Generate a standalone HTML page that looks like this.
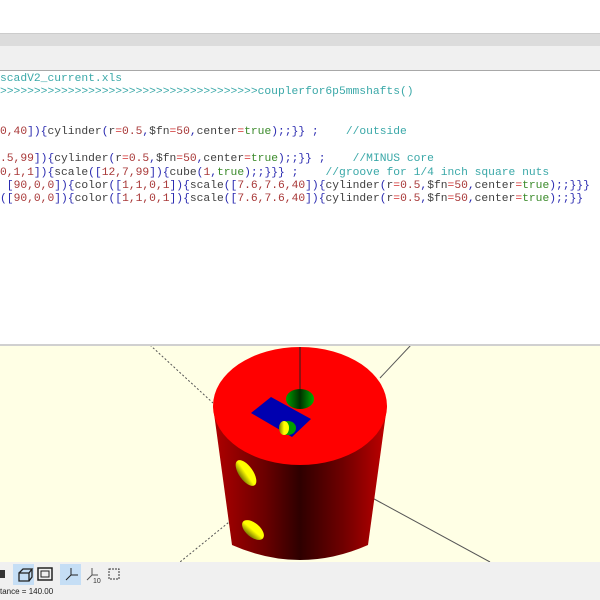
<!DOCTYPE html>
<html><head><style>
body{margin:0;width:600px;height:600px;overflow:hidden;background:#fff;position:relative;font-family:"Liberation Mono",monospace}
.l{position:absolute;left:0;font-size:11.3px;white-space:pre;line-height:13px;color:#404040}
.k{color:#2a2ab0}.n{color:#a83838}.t{color:#3a8a2a}.c{color:#3aa8a8}.e{color:#d03030}
</style></head><body>
<div style="position:absolute;top:33px;left:0;width:600px;height:12px;background:#dcdcdc;border-top:1px solid #ccc;border-bottom:1px solid #c8c8c8"></div>
<div style="position:absolute;top:46px;left:0;width:600px;height:24px;background:#f0f0f0"></div>
<div style="position:absolute;top:70px;left:0;width:600px;height:1px;background:#a8a8a8"></div>
<div class="l c" style="top:73px">scadV2_current.xls</div>
<div class="l c" style="top:86px">&gt;&gt;&gt;&gt;&gt;&gt;&gt;&gt;&gt;&gt;&gt;&gt;&gt;&gt;&gt;&gt;&gt;&gt;&gt;&gt;&gt;&gt;&gt;&gt;&gt;&gt;&gt;&gt;&gt;&gt;&gt;&gt;&gt;&gt;&gt;&gt;&gt;&gt;couplerfor6p5mmshafts()</div>
<div class="l" style="top:126px"><span class="n">0,40</span><span class="k">]){</span>cylinder<span class="k">(</span>r<span class="e">=</span><span class="n">0.5</span><span class="k">,</span>$fn<span class="e">=</span><span class="n">50</span><span class="k">,</span>center<span class="e">=</span><span class="t">true</span><span class="k">);;}} ;</span>    <span class="c">//outside</span></div>
<div class="l" style="top:153px"><span class="n">.5,99</span><span class="k">]){</span>cylinder<span class="k">(</span>r<span class="e">=</span><span class="n">0.5</span><span class="k">,</span>$fn<span class="e">=</span><span class="n">50</span><span class="k">,</span>center<span class="e">=</span><span class="t">true</span><span class="k">);;}} ;</span>    <span class="c">//MINUS core</span></div>
<div class="l" style="top:167px"><span class="n">0,1,1</span><span class="k">]){</span>scale<span class="k">([</span><span class="n">12,7,99</span><span class="k">]){</span>cube<span class="k">(</span><span class="n">1</span><span class="k">,</span><span class="t">true</span><span class="k">);;}}} ;</span>    <span class="c">//groove for 1/4 inch square nuts</span></div>
<div class="l" style="top:180px"> <span class="k">[</span><span class="n">90,0,0</span><span class="k">]){</span>color<span class="k">([</span><span class="n">1,1,0,1</span><span class="k">]){</span>scale<span class="k">([</span><span class="n">7.6,7.6,40</span><span class="k">]){</span>cylinder<span class="k">(</span>r<span class="e">=</span><span class="n">0.5</span><span class="k">,</span>$fn<span class="e">=</span><span class="n">50</span><span class="k">,</span>center<span class="e">=</span><span class="t">true</span><span class="k">);;}}}</span></div>
<div class="l" style="top:193px"><span class="k">([</span><span class="n">90,0,0</span><span class="k">]){</span>color<span class="k">([</span><span class="n">1,1,0,1</span><span class="k">]){</span>scale<span class="k">([</span><span class="n">7.6,7.6,40</span><span class="k">]){</span>cylinder<span class="k">(</span>r<span class="e">=</span><span class="n">0.5</span><span class="k">,</span>$fn<span class="e">=</span><span class="n">50</span><span class="k">,</span>center<span class="e">=</span><span class="t">true</span><span class="k">);;}}</span></div>
<div style="position:absolute;top:344px;left:0;width:600px;height:2px;background:#d0d0d0"></div>
<svg style="position:absolute;top:346px;left:0" width="600" height="216" viewBox="0 346 600 216">
<defs><linearGradient id="g" x1="0" x2="1"><stop offset="0" stop-color="#b00000"/><stop offset="0.3" stop-color="#6a0000"/><stop offset="0.5" stop-color="#2e0000"/><stop offset="0.75" stop-color="#700000"/><stop offset="1" stop-color="#c00000"/></linearGradient>
<linearGradient id="y" x1="0" x2="1"><stop offset="0" stop-color="#7a7a00"/><stop offset="0.5" stop-color="#ffff00"/></linearGradient>
<linearGradient id="gr" x1="0" x2="1"><stop offset="0" stop-color="#00a000"/><stop offset="0.5" stop-color="#003000"/><stop offset="1" stop-color="#00b000"/></linearGradient></defs>
<rect x="0" y="346" width="600" height="216" fill="#ffffe5"/>
<line x1="150" y1="345" x2="213" y2="403" stroke="#555" stroke-dasharray="2,2"/>
<line x1="250" y1="505" x2="180" y2="562" stroke="#555" stroke-dasharray="2,2"/>
<line x1="380" y1="378" x2="411" y2="345" stroke="#555"/>
<line x1="365" y1="494" x2="490" y2="562" stroke="#555"/>
<path d="M213,406 L232,545 Q300,575 368,545 L387,406 Z" fill="url(#g)"/>
<ellipse cx="300" cy="406" rx="87" ry="59" fill="#ff0000"/>
<line x1="300" y1="347" x2="300" y2="400" stroke="#222"/>
<ellipse cx="300" cy="399" rx="14" ry="10" fill="url(#gr)"/>
<polygon points="251,413 271,397 311,419 292,437" fill="#0000b0"/>
<ellipse cx="288" cy="428" rx="8" ry="7" fill="#00a000"/>
<ellipse cx="284" cy="428" rx="5" ry="7" fill="url(#y)"/>
<ellipse cx="246" cy="473" rx="7" ry="15" transform="rotate(-35 246 473)" fill="url(#y)"/>
<ellipse cx="253" cy="530" rx="7" ry="13" transform="rotate(-50 253 530)" fill="url(#y)"/>
</svg>
<div style="position:absolute;top:562px;left:0;width:600px;height:38px;background:#f0f0f0"></div>
<svg style="position:absolute;top:562px;left:0" width="130" height="24">
<rect x="0" y="8" width="5" height="8" fill="#333"/>
<rect x="13" y="2" width="21" height="21" fill="#c5def5"/>
<path d="M19,11 L29,11 L29,19 L19,19 Z M19,11 L23,7 L32,7 L29,11 M32,7 L32,15 L29,19" fill="none" stroke="#222" stroke-width="1.3"/>
<rect x="38" y="6" width="14" height="12" fill="none" stroke="#222" stroke-width="1.5"/>
<rect x="41" y="9" width="8" height="6" fill="none" stroke="#222"/>
<rect x="60" y="2" width="21" height="21" fill="#c5def5"/>
<path d="M71,6 L71,13 L78,13 M71,13 L66,18" stroke="#222" fill="none"/>
<path d="M92,6 L92,13 L98,13 M92,13 L87,18" stroke="#555" fill="none"/>
<text x="93" y="21" font-size="7" font-family="Liberation Sans" fill="#333">10</text>
<rect x="109" y="7" width="10" height="10" fill="none" stroke="#333" stroke-dasharray="2,1"/>
</svg>
<div style="position:absolute;top:587px;left:0;font:8px 'Liberation Sans',sans-serif;color:#222">tance = 140.00</div>
</body></html>
